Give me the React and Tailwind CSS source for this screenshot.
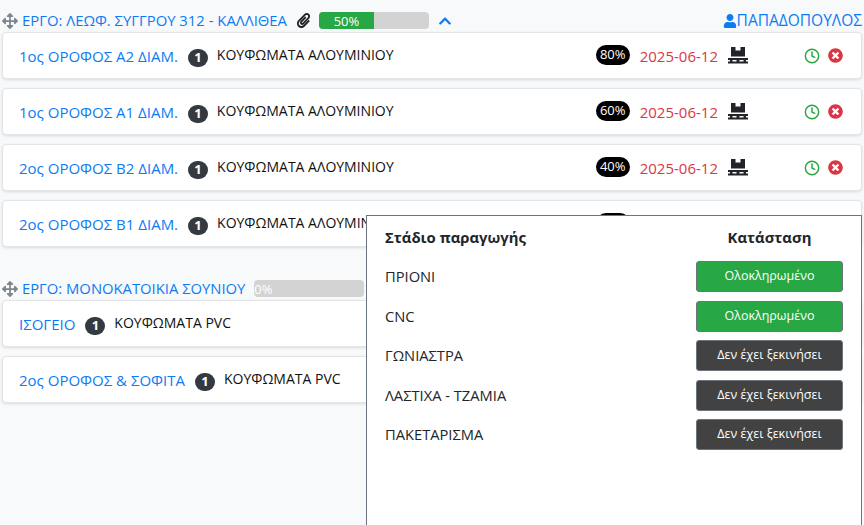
import { FaArrowsAlt, FaPaperclip, FaChevronUp, FaUser, FaTimesCircle } from 'react-icons/fa'
import { FiClock } from 'react-icons/fi'

const FIRST = [
  ['1ος ΟΡΟΦΟΣ Α2 ΔΙΑΜ.', '80%'],
  ['1ος ΟΡΟΦΟΣ Α1 ΔΙΑΜ.', '60%'],
  ['2ος ΟΡΟΦΟΣ Β2 ΔΙΑΜ.', '40%'],
  ['2ος ΟΡΟΦΟΣ Β1 ΔΙΑΜ.', '20%'],
]

const SECOND = ['ΙΣΟΓΕΙΟ', '2ος ΟΡΟΦΟΣ & ΣΟΦΙΤΑ']

const STAGES = [
  ['ΠΡΙΟΝΙ', true],
  ['CNC', true],
  ['ΓΩΝΙΑΣΤΡΑ', false],
  ['ΛΑΣΤΙΧΑ - ΤΖΑΜΙΑ', false],
  ['ΠΑΚΕΤΑΡΙΣΜΑ', false],
]

function PalletIcon() {
  return (
    <svg width="20" height="17" viewBox="0 0 20 17" className="text-[#212529]" fill="currentColor">
      <path d="M3 0h4.500v3.500h5V0H17v9.500H3z" />
      <path d="M0 11h20v2h-2v1.500h2v2H0v-2h2V13H0zM4.500 13v1.500h4V13zM11.500 13v1.500h4V13z" fillRule="evenodd" />
    </svg>
  )
}

function CountBadge() {
  return (
    <span className="flex h-[18px] w-[20px] shrink-0 items-center justify-center rounded-full bg-[#343a40] text-[13px] font-bold text-white">
      1
    </span>
  )
}

function Card({ name, type, percent }) {
  return (
    <div className="flex h-[47px] items-center rounded-[4px] border border-[#e3e4e6] bg-white pl-[16px] pr-[18px] shadow-[0_1px_3px_rgba(0,0,0,0.12)]">
      <span className="mt-[2px] text-[15px] whitespace-nowrap text-[#0d7bf5]">{name}</span>
      <span className="mt-[4px] ml-[10px]"><CountBadge /></span>
      <span className="mb-[2px] ml-[9px] text-[14px] whitespace-nowrap text-[#111]">{type}</span>
      {percent && (
        <div className="ml-auto flex items-center">
          <span className="mb-[1px] flex h-[20px] w-[34px] items-center justify-center rounded-full bg-black text-[13px] text-white">
            {percent}
          </span>
          <span className="mt-[1px] ml-[10px] text-[15px] text-[#dc3545]">2025-06-12</span>
          <span className="ml-[10px]"><PalletIcon /></span>
          <FiClock className="ml-[56px] text-[16px] text-[#28a745]" strokeWidth={2.2} />
          <FaTimesCircle className="ml-[8px] text-[15px] text-[#dc3545]" />
        </div>
      )}
    </div>
  )
}

function Progress({ value }) {
  return (
    <div className="flex h-[17px] w-[110px] overflow-hidden rounded-[4px] bg-[#d3d3d3] text-[13px] leading-[19px] text-white">
      {value > 0 ? (
        <div className="w-[55px] bg-[#28a745] text-center">{value}%</div>
      ) : (
        <span>0%</span>
      )}
    </div>
  )
}

export default function App() {
  return (
    <div
      className="relative h-[525px] w-[864px] overflow-hidden bg-[#f8f9fa] pt-[9px]"
      style={{ fontFamily: '"Open Sans", "Noto Sans", sans-serif' }}
    >
      <div className="flex h-[23px] items-center pl-[2px]">
        <FaArrowsAlt className="text-[16px] text-[#7d868e]" />
        <span className="ml-[4px] text-[14.85px] text-[#0d7bf5]">ΕΡΓΟ: ΛΕΩΦ. ΣΥΓΓΡΟΥ 312 - ΚΑΛΛΙΘΕΑ</span>
        <FaPaperclip className="ml-[9px] text-[15px] text-[#212529]" />
        <span className="ml-[8px]"><Progress value={50} /></span>
        <FaChevronUp className="ml-[9px] text-[14px] text-[#0d7bf5]" />
        <span className="ml-auto flex items-center pr-[2px] text-[15.5px] text-[#0d7bf5]">
          <FaUser className="text-[14px]" />
          ΠΑΠΑΔΟΠΟΥΛΟΣ
        </span>
      </div>

      <div className="mx-[2px] flex w-[860px] flex-col gap-[9px]">
        {FIRST.map(([name, percent]) => (
          <Card key={name} name={name} type="ΚΟΥΦΩΜΑΤΑ ΑΛΟΥΜΙΝΙΟΥ" percent={percent} />
        ))}
      </div>

      <div className="mt-[30px] flex h-[23px] items-center pl-[2px]">
        <FaArrowsAlt className="text-[16px] text-[#7d868e]" />
        <span className="ml-[4px] text-[14.8px] text-[#0d7bf5]">ΕΡΓΟ: ΜΟΝΟΚΑΤΟΙΚΙΑ ΣΟΥΝΙΟΥ</span>
        <span className="ml-[9px]"><Progress value={0} /></span>
      </div>

      <div className="mx-[2px] flex w-[860px] flex-col gap-[9px]">
        {SECOND.map((name) => (
          <Card key={name} name={name} type="ΚΟΥΦΩΜΑΤΑ PVC" />
        ))}
      </div>

      <div className="absolute top-[215px] left-[366px] h-[320px] w-[496px] border border-[#6c757d] bg-white px-[18px] pt-[10px]">
        <div className="flex h-[22px] items-center justify-between text-[14.85px] font-bold text-[#212529]">
          <span>Στάδιο παραγωγής</span>
          <span className="w-[147px] text-center">Κατάσταση</span>
        </div>
        <div className="mt-[13px] flex flex-col gap-[8.500px]">
          {STAGES.map(([stage, done]) => (
            <div key={stage} className="flex items-center justify-between">
              <span className="text-[14.7px] text-[#212529]">{stage}</span>
              <span
                className={
                  done
                    ? 'flex h-[31px] w-[147px] items-center justify-center rounded-[3px] border border-[#6c757d] bg-[#28a745] text-[12.5px] text-white'
                    : 'flex h-[31px] w-[147px] items-center justify-center rounded-[3px] border border-[#6c757d] bg-[#424242] text-[12.5px] text-white'
                }
              >
                {done ? 'Ολοκληρωμένο' : 'Δεν έχει ξεκινήσει'}
              </span>
            </div>
          ))}
        </div>
      </div>
    </div>
  )
}
